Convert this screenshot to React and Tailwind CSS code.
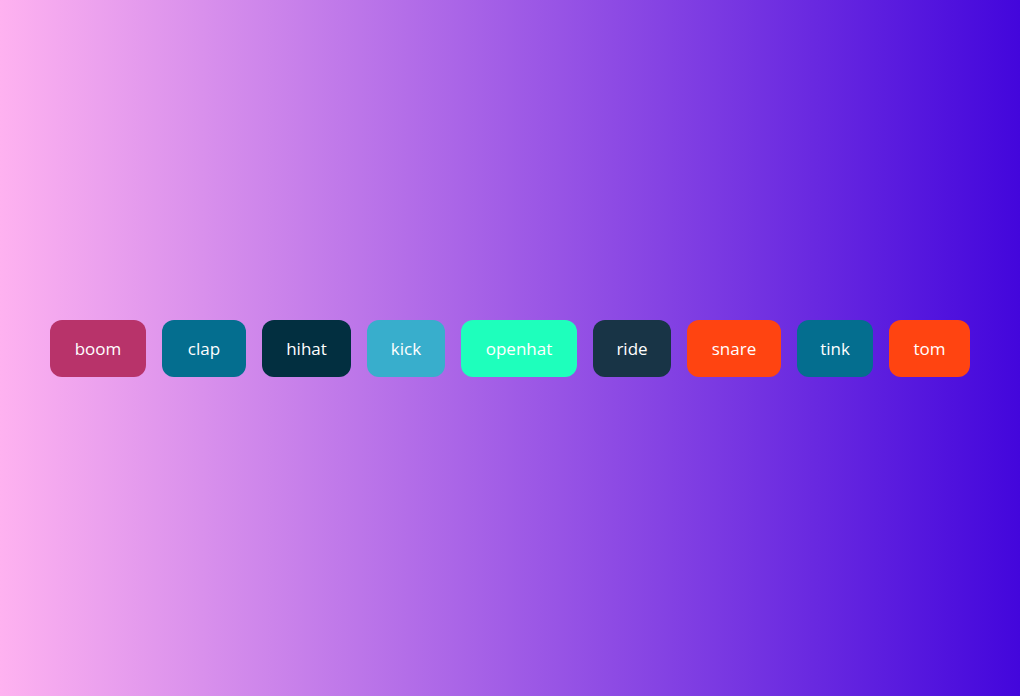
const pads = [
  { name: "boom", color: "bg-[#b8336a]", w: "w-[96px]" },
  { name: "clap", color: "bg-[#046e8f]", w: "w-[84px]" },
  { name: "hihat", color: "bg-[#022f40]", w: "w-[89px]" },
  { name: "kick", color: "bg-[#38aecc]", w: "w-[78px]" },
  { name: "openhat", color: "bg-[#1effbc]", w: "w-[116px]" },
  { name: "ride", color: "bg-[#183446]", w: "w-[78px]" },
  { name: "snare", color: "bg-[#ff4411]", w: "w-[94px]" },
  { name: "tink", color: "bg-[#046e8f]", w: "w-[76px]" },
  { name: "tom", color: "bg-[#ff4411]", w: "w-[81px]" },
];

const App = () => {
  return (
    <div className="w-full h-[696px] flex items-center justify-center bg-linear-to-r/srgb from-[#feb2f0] to-[#4306dc] font-['Open_Sans',sans-serif]">
      <div className="flex gap-4 mt-px">
        {pads.map((pad) => (
          <button
            key={pad.name}
            className={`${pad.color} ${pad.w} h-[57px] rounded-xl text-white text-[17px]`}
          >
            {pad.name}
          </button>
        ))}
      </div>
    </div>
  );
};
export default App;
